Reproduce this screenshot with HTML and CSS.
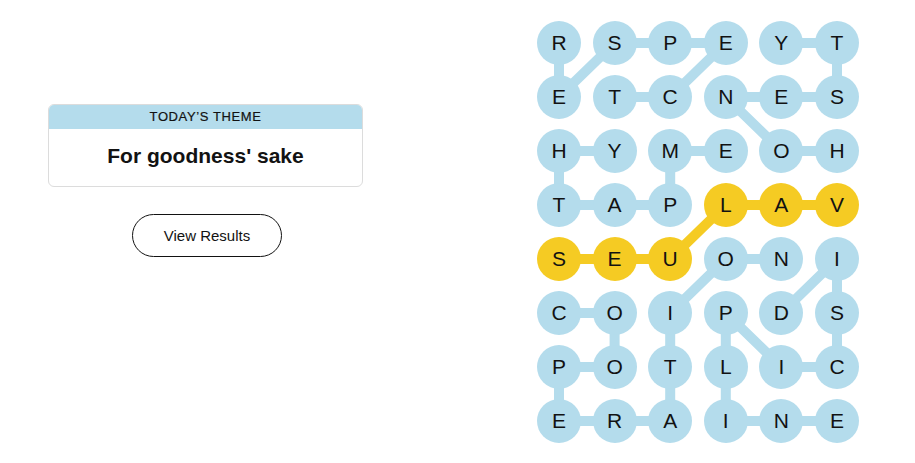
FILE: index.html
```html
<!DOCTYPE html>
<html lang="en">

<head>
    <meta charset="UTF-8">
    <meta name="viewport" content="width=device-width, initial-scale=1.0">
    <title>Strands</title>
    <link rel="stylesheet" href="styles.css">
</head>

<body>
    <div class="game">
        <!-- Theme card and results button -->
        <div class="sidebar">
            <div class="theme-card">
                <h2 class="theme-label">Today’s Theme</h2>
                <p class="theme-name">For goodness' sake</p>
            </div>
            <button class="results-btn">View Results</button>
        </div>

        <!-- Letter board -->
        <div class="board">
            <svg class="board-lines" width="322" height="422" viewBox="0 0 322 422">
                <g class="line-found">
                    <polyline points="22,22 22,76 77.6,22 133.2,22 188.8,22 133.2,76 77.6,76" />
                    <polyline points="300,130 244.4,130 188.8,76 244.4,76 300,76 300,22 244.4,22" />
                    <polyline points="188.8,130 133.2,130 133.2,184 77.6,184 22,184 22,130 77.6,130" />
                    <polyline points="22,292 77.6,292 77.6,346 22,346 22,400 77.6,400 133.2,400 133.2,346 133.2,292 188.8,238 244.4,238" />
                    <polyline points="244.4,292 300,238 300,292 300,346 244.4,346 188.8,292 188.8,346 188.8,400 244.4,400 300,400" />
                </g>
                <g class="line-spangram">
                    <polyline points="300,184 244.4,184 188.8,184 133.2,238 77.6,238 22,238" />
                </g>
            </svg>

            <div class="letters">
                <span class="cell">R</span><span class="cell">S</span><span class="cell">P</span><span class="cell">E</span><span class="cell">Y</span><span class="cell">T</span>
                <span class="cell">E</span><span class="cell">T</span><span class="cell">C</span><span class="cell">N</span><span class="cell">E</span><span class="cell">S</span>
                <span class="cell">H</span><span class="cell">Y</span><span class="cell">M</span><span class="cell">E</span><span class="cell">O</span><span class="cell">H</span>
                <span class="cell">T</span><span class="cell">A</span><span class="cell">P</span><span class="cell spangram">L</span><span class="cell spangram">A</span><span class="cell spangram">V</span>
                <span class="cell spangram">S</span><span class="cell spangram">E</span><span class="cell spangram">U</span><span class="cell">O</span><span class="cell">N</span><span class="cell">I</span>
                <span class="cell">C</span><span class="cell">O</span><span class="cell">I</span><span class="cell">P</span><span class="cell">D</span><span class="cell">S</span>
                <span class="cell">P</span><span class="cell">O</span><span class="cell">T</span><span class="cell">L</span><span class="cell">I</span><span class="cell">C</span>
                <span class="cell">E</span><span class="cell">R</span><span class="cell">A</span><span class="cell">I</span><span class="cell">N</span><span class="cell">E</span>
            </div>
        </div>
    </div>
</body>

</html>
```

FILE: styles.css
```css
body {
    font-family: "Liberation Sans", Arial, sans-serif;
    margin: 0;
    padding: 0;
    background-color: #fff;
    color: #121212;
}

.game {
    display: flex;
    align-items: flex-start;
    padding: 21px 0 0 48px;
}

.sidebar {
    width: 315px;
    padding-top: 83px;
    display: flex;
    flex-direction: column;
    align-items: center;
}

.theme-card {
    width: 100%;
    box-sizing: border-box;
    border: 1px solid #dcdcdc;
    border-radius: 6px;
    overflow: hidden;
    text-align: center;
}

.theme-label {
    margin: 0;
    height: 24px;
    line-height: 24px;
    background-color: #b4dcec;
    font-size: 13px;
    font-weight: normal;
    letter-spacing: 0.6px;
    text-transform: uppercase;
    -webkit-text-stroke: 0.2px #121212;
}

.theme-name {
    margin: 0;
    height: 57px;
    line-height: 54px;
    font-size: 21px;
    font-weight: bold;
}

.results-btn {
    margin-top: 27px;
    margin-left: 3px;
    width: 150px;
    height: 43px;
    border: 1px solid #121212;
    border-radius: 22px;
    background: #fff;
    color: #121212;
    font-family: inherit;
    font-size: 15px;
    cursor: pointer;
}

.board {
    position: relative;
    margin-left: 174px;
    width: 322px;
    height: 422px;
}

.board-lines {
    position: absolute;
    top: 0;
    left: 0;
}

.board-lines polyline {
    fill: none;
    stroke-width: 10;
    stroke-linejoin: round;
}

.line-found polyline {
    stroke: #b4dcec;
}

.line-spangram polyline {
    stroke: #f5cb23;
}

.letters {
    position: relative;
    display: grid;
    grid-template-columns: repeat(6, 44px);
    grid-auto-rows: 44px;
    column-gap: 11.6px;
    row-gap: 10px;
}

.cell {
    display: flex;
    align-items: center;
    justify-content: center;
    border-radius: 50%;
    background-color: #b4dcec;
    font-size: 21px;
}

.cell.spangram {
    background-color: #f5cb23;
}
```
